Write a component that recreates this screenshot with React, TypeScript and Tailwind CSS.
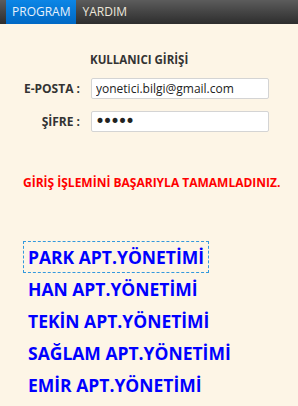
import { useState } from "react";

const apartments = [
    "PARK APT.YÖNETİMİ",
    "HAN APT.YÖNETİMİ",
    "TEKİN APT.YÖNETİMİ",
    "SAĞLAM APT.YÖNETİMİ",
    "EMİR APT.YÖNETİMİ",
];

function App() {
    const [email, setEmail] = useState("yonetici.bilgi@gmail.com");
    const [password, setPassword] = useState("12345");

    return (
        <div className="w-[298px] h-[406px] bg-[#fdf5e6] font-['Open_Sans',sans-serif] overflow-hidden">
            {/* Menu bar */}
            <div className="h-[24px] flex items-stretch pl-[6px] bg-gradient-to-b from-[#5c5c5c] to-[#2e2e2e]">
                <div className="px-[6px] flex items-center bg-gradient-to-b from-[#0c86e6] to-[#0068c4] text-[#e8f1fb] text-[12px]">PROGRAM</div>
                <div className="px-[6px] flex items-center text-[#ece6da] text-[12px]">YARDIM</div>
            </div>

            {/* Login form */}
            <div className="pt-[27px] pl-[90px] text-[11.5px] font-bold text-[#333]">KULLANICI GİRİŞİ</div>
            <div className="mt-[10px] flex flex-col gap-[12px]">
                <div className="flex items-center">
                    <label className="w-[80px] text-right text-[12px] font-bold text-[#333]">E-POSTA :</label>
                    <input
                        className="ml-[11px] w-[178px] h-[21px] bg-white border border-[#d4d4d4] rounded-[2px] px-[4px] text-[12px] text-[#222] outline-none"
                        value={email}
                        onChange={(e) => setEmail(e.target.value)}
                    />
                </div>
                <div className="flex items-center">
                    <label className="w-[80px] text-right text-[12px] font-bold text-[#333]">ŞİFRE :</label>
                    <input
                        type="password"
                        className="ml-[11px] w-[178px] h-[21px] bg-white border border-[#d4d4d4] rounded-[2px] px-[3px] font-['DejaVu_Sans',sans-serif] text-[17px] tracking-[-2.5px] text-[#222] outline-none"
                        value={password}
                        onChange={(e) => setPassword(e.target.value)}
                    />
                </div>
            </div>

            <div className="mt-[42px] pl-[23px] text-[12px] font-bold text-[#ff0000]">GİRİŞ İŞLEMİNİ BAŞARIYLA TAMAMLADINIZ.</div>

            {/* Apartment links */}
            <div className="mt-[49px] pl-[23px] flex flex-col items-start">
                {apartments.map((name, i) => (
                    <button
                        key={name}
                        className={`h-[32px] px-[4px] text-[17.5px] font-bold text-[#0000ff] leading-none ${i === 0 ? "border border-dashed border-[#3399dd]" : "border border-transparent"}`}
                    >
                        {name}
                    </button>
                ))}
            </div>
        </div>
    );
}

export default App;
